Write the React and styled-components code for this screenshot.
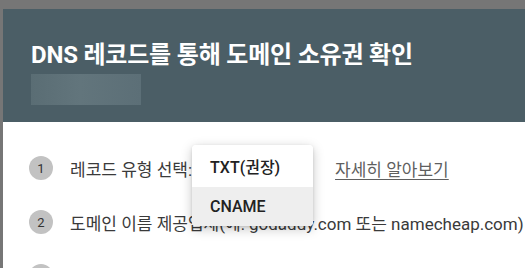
import React from "react"
import styled, { createGlobalStyle } from "styled-components"

const GlobalStyle = createGlobalStyle`
  html, body {
    margin: 0;
    padding: 0;
    background: #767676;
    overflow: hidden;
  }
  body {
    font-family: Roboto, "Noto Sans CJK KR", "Noto Sans", sans-serif;
  }
`

const Screen = styled.div`
  width: 525px;
  height: 268px;
  overflow: hidden;
  padding: 9px 0 0 3px;
  box-sizing: border-box;
`

const Dialog = styled.div`
  width: 600px;
  background: #ffffff;
`

const Header = styled.div`
  background: #4b5e66;
  padding: 31px 28px 17px;
`

const Title = styled.h1`
  margin: 0;
  font-size: 24px;
  line-height: 31px;
  font-weight: 700;
  color: #ffffff;
  letter-spacing: -0.2px;
`

const Redacted = styled.div`
  margin-top: 3px;
  width: 110px;
  height: 31px;
  background: linear-gradient(90deg, #5a6d74 0%, #62757c 45%, #5c6f77 100%);
`

const Body = styled.div`
  padding: 34px 0 0 26px;
  display: flex;
  flex-direction: column;
  gap: 30px;
`

const Row = styled.div`
  display: flex;
  align-items: center;
  height: 24px;
  font-size: 17px;
  color: #3a3a3a;
  white-space: nowrap;
`

const Step = styled.span`
  flex: none;
  width: 24px;
  height: 24px;
  border-radius: 50%;
  background: #c2c2c2;
  color: #333;
  font-size: 13px;
  display: flex;
  align-items: center;
  justify-content: center;
  margin-right: 17px;
`

const SelectSlot = styled.span`
  position: relative;
  display: inline-block;
  width: 143px;
  height: 24px;
`

const Menu = styled.ul`
  position: absolute;
  top: -11px;
  left: 0;
  width: 121px;
  margin: 0;
  padding: 0;
  list-style: none;
  background: #fff;
  border-radius: 4px;
  box-shadow: 0 3px 12px rgba(0, 0, 0, 0.22), 0 1px 3px rgba(0, 0, 0, 0.12);
  overflow: hidden;
  z-index: 2;
`

const MenuItem = styled.li`
  height: ${p => p.$h}px;
  display: flex;
  align-items: center;
  padding-left: 18px;
  font-size: 16px;
  font-weight: 500;
  color: #222;
  background: ${p => (p.$active ? "#eeeeee" : "#ffffff")};
`

const Link = styled.a`
  color: #5f5f5f;
  text-decoration: underline;
  text-underline-offset: 3px;
`

export default function App() {
  return (
    <>
      <GlobalStyle />
      <Screen>
        <Dialog>
          <Header>
            <Title>DNS 레코드를 통해 도메인 소유권 확인</Title>
            <Redacted />
          </Header>
          <Body>
            <Row>
              <Step>1</Step>
              레코드 유형 선택:
              <SelectSlot>
                <Menu>
                  <MenuItem $h={42}>TXT(권장)</MenuItem>
                  <MenuItem $h={39} $active>CNAME</MenuItem>
                </Menu>
              </SelectSlot>
              <Link>자세히 알아보기</Link>
            </Row>
            <Row>
              <Step>2</Step>
              도메인 이름 제공업체(예: godaddy.com 또는 namecheap.com)
            </Row>
            <Row>
              <Step>3</Step>
              아래 TXT 레코드를 example.com의 DNS 구성에 복사하세요
            </Row>
          </Body>
        </Dialog>
      </Screen>
    </>
  )
}
